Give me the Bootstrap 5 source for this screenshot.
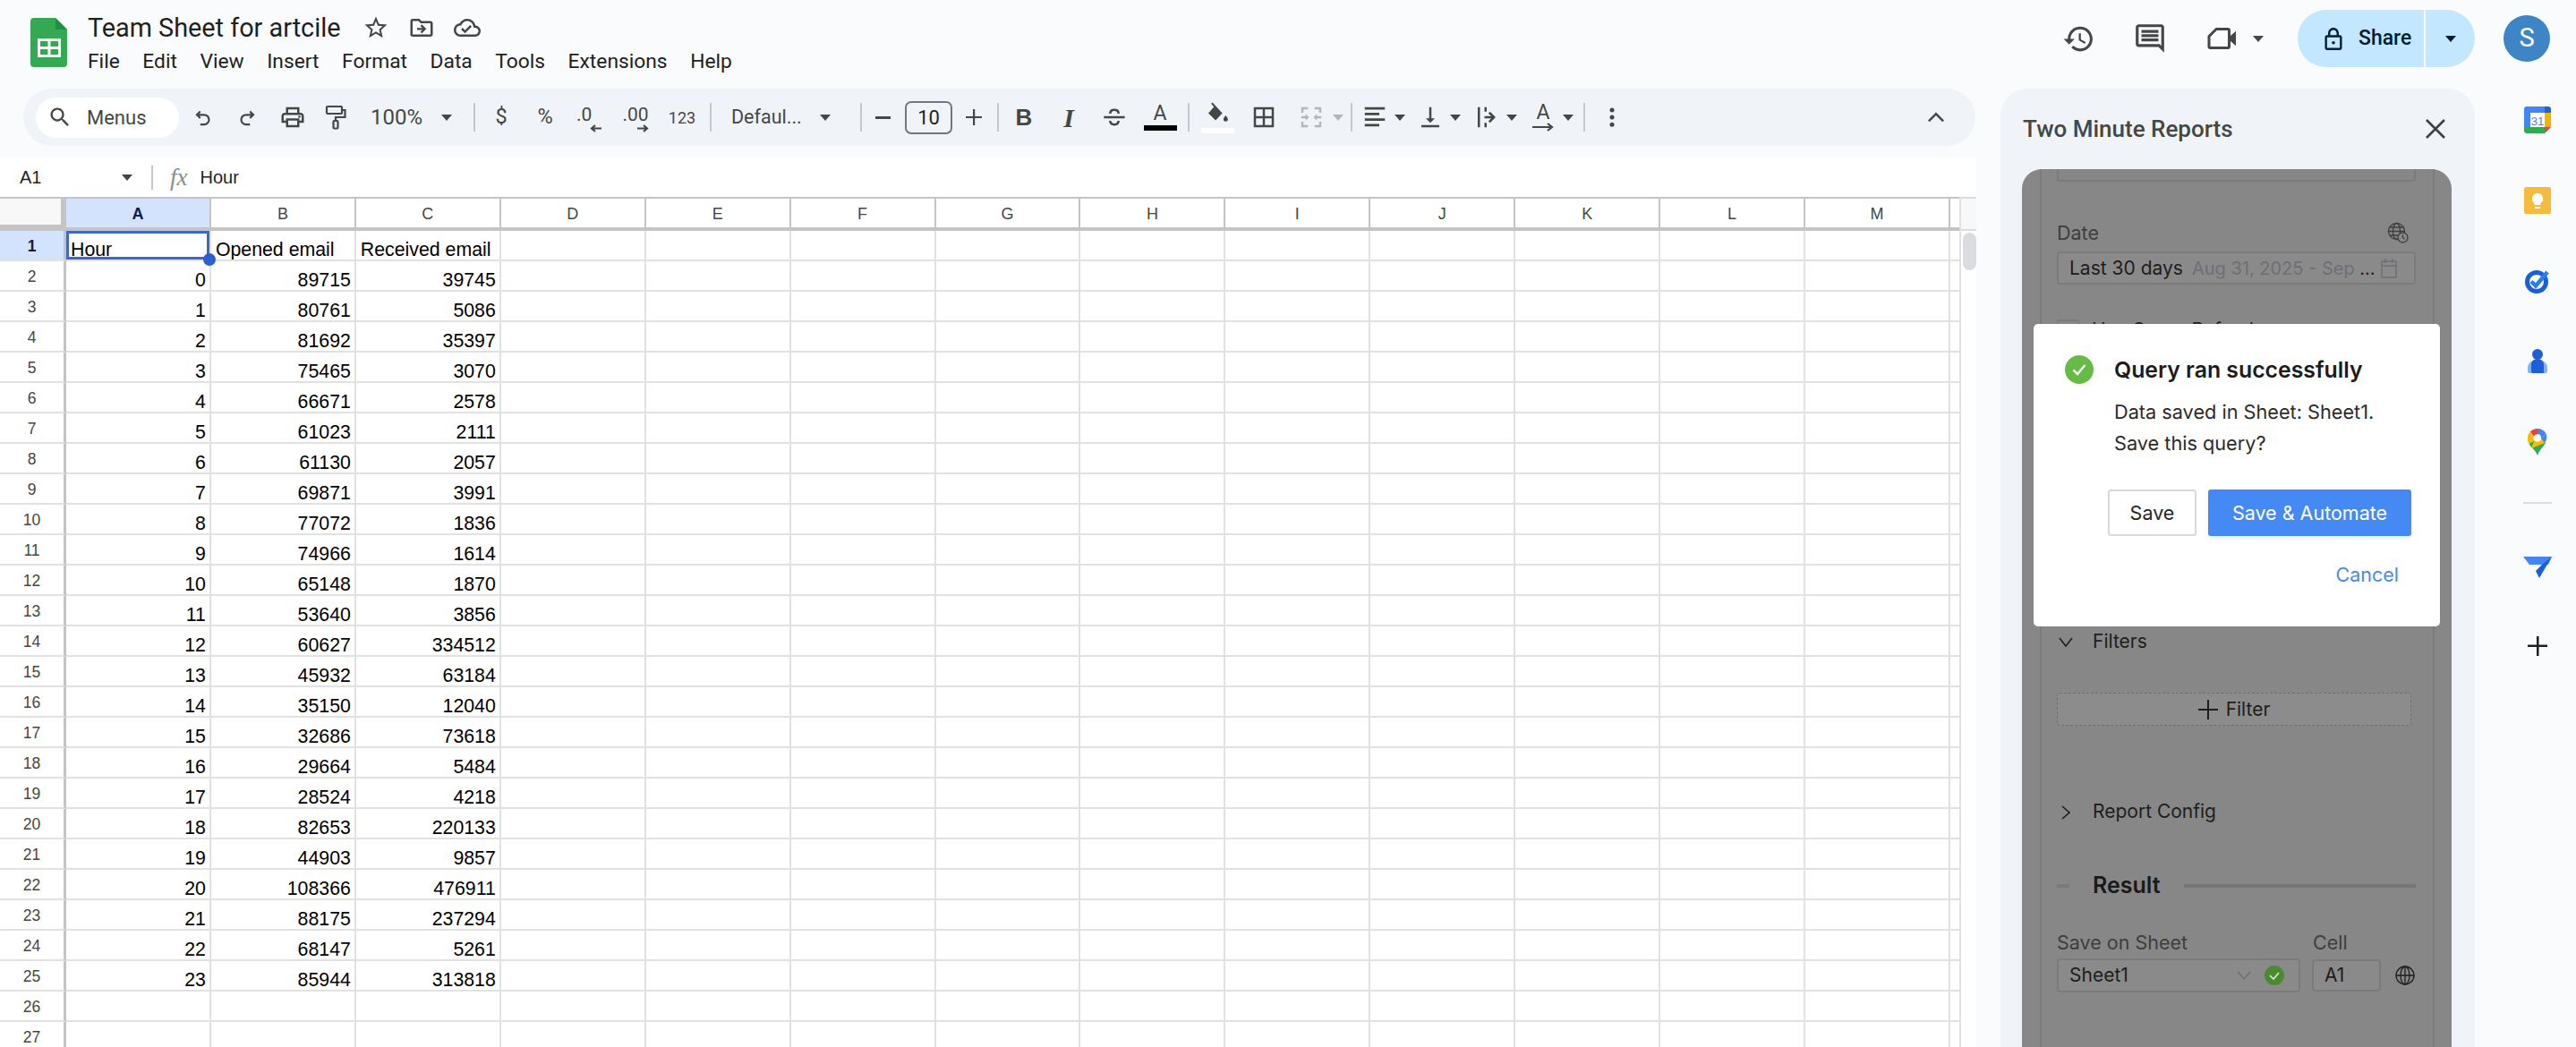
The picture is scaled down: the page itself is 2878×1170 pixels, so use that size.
<!DOCTYPE html>
<html lang="en">
<head>
<meta charset="utf-8">
<title>Team Sheet for artcile</title>
<link href="https://cdn.jsdelivr.net/npm/bootstrap@5.3.0/dist/css/bootstrap.min.css" rel="stylesheet">
<style>
html,body{height:100%;overflow:hidden;background:#f9fbfd;}
body{font-family:Roboto,"Liberation Sans",sans-serif;color:#1f1f1f;}
svg{display:block;fill:currentColor;flex:none;}
svg.ln{fill:none;stroke:currentColor;}
.app-shell{width:2878px;height:1170px;}
.main-row{min-height:0;}
.top-bar{height:99px;flex:none;}
.doc-logo{margin:20px 23px 0 34px;}
.doc-title{font-size:28.8px;line-height:34px;margin-top:14px;white-space:nowrap;}
.doc-title-icons{color:#444746;gap:21px;margin-left:25px;}
.doc-menu{font-size:22.8px;line-height:28px;margin-top:7px;color:#1f1f1f;}
.doc-menu span{margin-right:25.500px;}
.top-actions{margin-left:auto;height:86px;color:#444746;}
.act-history{margin-right:42px;}
.act-comment{margin-right:44px;}
.tcaret{display:inline-block;width:0;height:0;border-left:6px solid transparent;border-right:6px solid transparent;border-top:7px solid #444746;flex:none;}
.share-group{width:198px;height:64px;margin-left:38px;border-radius:32px;background:#c2e7ff;color:#001d35;overflow:hidden;}
.share-main{width:143px;padding-left:30px;gap:18px;font-size:23px;font-weight:500;border-right:2px solid #f9fbfd;height:100%;}
.share-drop{flex:1;height:100%;}
.share-drop .tcaret{border-top-color:#001d35;}
.avatar-s{width:52px;height:52px;border-radius:50%;background:#3d85c6;color:#fff;font-size:29px;margin:0 29px 0 32px;}
.left-col{width:2208px;flex:none;}
.tool-bar{width:2181px;height:64px;margin:0 0 13px 26px;padding-left:14px;border-radius:32px;background:#f0f4f9;color:#444746;flex:none;font-size:23.500px;}
.menu-search{width:160px;height:45px;border-radius:23px;background:#fff;padding-left:13px;gap:16px;margin-right:3px;font-size:22px;color:#444746;}
.tw{display:flex;align-items:center;justify-content:center;height:64px;flex:none;}
.tw-40{width:40px}.tw-42{width:42px}.tw-44{width:44px}.tw-46{width:46px}.tw-48{width:48px}.tw-50{width:50px}.tw-52{width:52px}.tw-56{width:56px}.tw-58{width:58px}.tw-62{width:62px}
.tsep{width:2px;height:32px;background:#c7c7c7;flex:none;}
.ml-2px{margin-left:2px}.ml-3px{margin-left:3px}.ml-6px{margin-left:6px}.ml-7px{margin-left:7px}.ml-8px{margin-left:8px}.ml-9px{margin-left:9px}.ml-11px{margin-left:11px}.ml-16px{margin-left:16px}
.zoom-slot{width:132px;padding-left:17px;font-size:24px;}
.zoom-slot .tcaret{margin-left:21px;}
.font-slot{width:166px;padding-left:22px;font-size:21.500px;}
.font-slot .tcaret{margin-left:20px;}
.dec-stack{display:flex;flex-direction:column;align-items:flex-end;font-size:21px;line-height:22px;margin-top:2px;}
.dec-one{width:28px;}
.num123{font-size:18px;}
.size-box{width:53px;height:37px;border:2px solid #747775;border-radius:7px;margin-left:2px;color:#1f1f1f;font-size:22px;flex:none;}
.fmt-b{font-family:"Liberation Sans",sans-serif;font-weight:700;font-size:26px;}
.fmt-i{font-family:"Liberation Serif",serif;font-weight:700;font-style:italic;font-size:30px;}
.color-stack{display:flex;flex-direction:column;align-items:center;width:37px;}
.color-a{font-size:23px;line-height:22px;}
.color-bar{width:37px;height:6px;background:#000;margin-top:2px;}
.color-bar-w{background:#fff;}
.merge-off{color:#b3b5b7;}
.tcaret-off{border-top-color:#b3b5b7;}
.tool-end{margin-left:auto;margin-right:22px;}
.formula-bar{height:44px;background:#fff;flex:none;font-family:"Liberation Sans",sans-serif;padding-left:22px;font-size:20px;color:#1f1f1f;}
.name-box{width:147px;}
.name-box .tcaret{margin-left:auto;margin-right:21px;}
.fx-sep{width:2px;height:27px;background:#c7c7c7;}
.fx-mark{font-family:"Liberation Serif",serif;font-style:italic;font-size:27px;color:#8a8d8f;margin:0 14px 0 19px;line-height:1;}
.grid-wrap{flex:1;min-height:0;background:#fff;overflow:hidden;}
.gs-grid{table-layout:fixed;border-collapse:separate;border-spacing:0;width:2189px;font-family:"Liberation Sans",sans-serif;font-size:21.300px;color:#000;flex:none;}
.gs-grid col.c-row{width:74px}.gs-grid col.c-dat{width:161.920px}.gs-grid col.c-end{width:10px}
.gs-grid thead th{height:38px;border-top:2px solid #c4c4c4;border-bottom:4px solid #c4c4c4;border-right:2px solid #c4c4c4;text-align:center;font-weight:400;font-size:18px;color:#444746;padding:3px 0 0;}
.gs-grid thead th.corner{background:#f8f8f8;border-right:6px solid #c4c4c4;border-bottom:7px solid #c4c4c4;}
.gs-grid thead th.hl{background:#d3e3fd;color:#0b1f4b;font-weight:700;}
.gs-grid thead th.last-col{border-right:0;}
.gs-grid tbody th{height:34px;padding:3px 0 0;border-right:3px solid #c4c4c4;border-bottom:2px solid #e1e1e1;text-align:center;font-weight:400;font-size:17.500px;color:#444746;}
.gs-grid tbody th.hl{background:#d3e3fd;color:#0b1f4b;font-weight:700;}
.gs-grid td{height:34px;padding:0 4px 0 5px;border-right:2px solid #e1e1e1;border-bottom:2px solid #e1e1e1;vertical-align:bottom;line-height:21px;white-space:nowrap;overflow:hidden;}
.gs-grid td.num{text-align:right;}
.gs-grid td.last-col{border-right:0;}
.gs-grid td.cell-active{position:relative;overflow:visible;box-shadow:inset 0 0 0 3px #3c68c6;}
.fill-handle{position:absolute;right:-7px;bottom:-7px;width:14px;height:14px;border-radius:50%;background:#2a5fcf;z-index:2;}
.scroll-gutter{flex:1;border-left:2px solid #e1e1e1;}
.gutter-head{height:38px;background:#f8f8f8;border-top:2px solid #dcdcdc;border-bottom:2px solid #dcdcdc;}
.scroll-thumb{width:15px;height:42px;margin:2px 0 0 2px;border-radius:8px;background:#dadce0;}
.side-panel{width:530px;margin-left:27px;border-radius:30px 30px 0 0;background:#f0f4f9;flex:none;font-family:Inter,"Liberation Sans",sans-serif;}
.side-head{height:90px;padding:0 32px 0 25px;flex:none;color:#3c4043;}
.side-title{font-family:Roboto,sans-serif;font-size:26px;font-weight:500;color:#444746;}
.addon-body{position:relative;flex:1;margin:0 26px 0 24px;background:#878787;border-radius:22px 22px 0 0;overflow:hidden;padding:0 19px 0 20px;min-height:0;}
.addon-card{height:100%;border-left:2px solid #7b7b7b;border-right:2px solid #7b7b7b;padding:0 19px 0 17px;font-size:21px;color:#1d1d1d;}
.stub-field{height:14px;border:2px solid #7b7b7b;border-top:0;border-radius:0 0 3px 3px;}
.fld-label{color:#3e3e3e;font-size:21.500px;line-height:28px;}
.mt-date{margin-top:43px;}
.fld-box{height:37px;border:2px solid #7b7b7b;border-radius:4px;background:#8a8a8a;padding:0 12px;white-space:nowrap;overflow:hidden;}
.mt-box{margin-top:7px;}
.date-range{color:#6d6f75;font-size:20px;margin-left:10px;}
.range-dots{color:#1d1d1d;}
.ic-cal{color:#6d6f75;margin-left:auto;margin-right:6px;}
.chk-row{margin-top:38px;height:26px;gap:14px;}
.chk-box{width:25px;height:25px;border:2px solid #7b7b7b;border-radius:3px;}
.filter-row{margin-top:322px;height:26px;gap:20px;}
.chev{flex:none;width:20px;}
.dash-btn{height:37px;width:396px;margin-top:44px;border:1px dashed #6f6f6f;background:#8c8c8c;border-radius:3px;gap:9px;}
.report-row{margin-top:83px;height:26px;gap:20px;}
.result-row{margin-top:52px;height:36px;font-size:25px;font-weight:600;color:#1a1a1a;}
.result-rule{height:4px;background:#767676;}
.rule-a{width:14px;margin-right:26px;background:#7b7b7b;}
.rule-b{flex:1;margin-left:26px;}
.labels-row{margin-top:31px;}
.lab-sheet{width:286px;}
.sheet-row{margin-top:4px;height:38px;}
.sel-sheet{width:272px;height:38px;margin-right:13px;flex:none;}
.sel-sheet svg.sel-chev{margin-left:auto;margin-right:14px;color:#6f6f6f;}
.ok-dot{width:22px;height:28px;flex:none;margin-right:4px;}
.cell-box{width:77px;height:36px;flex:none;}
.ic-globe{margin-left:16px;color:#1d1d1d;}
.qr-dialog{position:absolute;left:13px;top:173px;width:454px;height:338px;background:#fff;border-radius:5px;font-family:Inter,"Liberation Sans",sans-serif;z-index:3;}
.qr-head{padding:35px 0 0 35px;gap:23px;}
.qr-title{font-size:24.800px;font-weight:600;color:#1c1c1c;line-height:32px;}
.qr-text{margin:15px 0 0 90px;font-size:21.700px;text-rendering:geometricPrecision;line-height:35px;color:#2b2b2b;}
.qr-actions{margin:33px 32px 0 0;gap:13px;}
.qr-btn{height:52px;font-size:21.500px;border-radius:3px;padding:0;}
.qr-save{width:99px;background:#fff;border:2px solid #d9d9d9;color:#262626;}
.qr-auto{width:227px;background:#4589f5;border:0;color:#fff;box-shadow:0 3px 4px rgba(0,0,0,.08);}
.qr-cancel{margin:27px 46px 0 0;font-size:21.500px;color:#4a8ae6;text-align:right;line-height:32px;}
.app-strip{flex:1;padding:20px 0 0 27px;}
.strip-item{height:30px;margin-bottom:60px;}
.strip-div{width:32px;height:2px;background:#dadce0;margin:-8px 0 56px;}
.strip-cal{font-family:"Liberation Sans",sans-serif;}
</style>
</head>
<body>
<div class="app-shell d-flex flex-column">
  <header class="top-bar d-flex align-items-start">
    <svg class="doc-logo" width="41" height="55" viewBox="0 0 41 55"><path fill="#34a853" d="M4 0h24l13 13v38a4 4 0 0 1-4 4H4a4 4 0 0 1-4-4V4a4 4 0 0 1 4-4z"/><path fill="#1f8f45" d="M28 0l13 13H28z"/><path fill="#fff" d="M8 23h26v21H8zm3 3v6h8.500v-6zm11.500 0v6H31v-6zM11 35v6h8.500v-6zm11.500 0v6H31v-6z" fill-rule="evenodd"/></svg>
    <div>
      <div class="d-flex align-items-center doc-title">
        <span>Team Sheet for artcile</span>
        <div class="d-flex align-items-center doc-title-icons">
          <svg width="30" height="30" viewBox="0 0 24 24"><path d="M22 9.240l-7.190-.62L12 2 9.190 8.630 2 9.240l5.460 4.730L5.820 21 12 17.270 18.180 21l-1.630-7.030L22 9.240zM12 15.400l-3.760 2.270 1-4.280-3.320-2.880 4.380-.38L12 6.100l1.710 4.040 4.380.38-3.320 2.880 1 4.280L12 15.400z"/></svg>
          <svg width="30" height="30" viewBox="0 0 24 24"><path d="M20 6h-8l-2-2H4c-1.100 0-1.990.9-1.990 2L2 18c0 1.100.9 2 2 2h16c1.100 0 2-.9 2-2V8c0-1.100-.9-2-2-2zm0 12H4V6h5.170l2 2H20v10zM12.200 17l4-4-4-4-1.300 1.300 1.800 1.800H8v1.800h4.700l-1.800 1.800z"/></svg>
          <svg width="30" height="30" viewBox="0 0 24 24"><path d="M19.350 10.040C18.670 6.590 15.640 4 12 4 9.110 4 6.600 5.640 5.350 8.040 2.340 8.360 0 10.910 0 14c0 3.310 2.690 6 6 6h13c2.760 0 5-2.240 5-5 0-2.640-2.050-4.780-4.650-4.960zM19 18H6c-2.210 0-4-1.790-4-4 0-2.050 1.530-3.760 3.560-3.970l1.070-.11.5-.95C8.080 7.140 9.940 6 12 6c2.620 0 4.880 1.860 5.390 4.430l.3 1.500 1.530.11c1.560.1 2.780 1.410 2.780 2.960 0 1.650-1.350 3-3 3zm-9-3.820l-2.090-2.090L6.500 13.500 10 17l6.010-6.010-1.410-1.410z"/></svg>
        </div>
      </div>
      <div class="doc-menu d-flex"><span>File</span><span>Edit</span><span>View</span><span>Insert</span><span>Format</span><span>Data</span><span>Tools</span><span>Extensions</span><span>Help</span></div>
    </div>
    <div class="top-actions d-flex align-items-center">
      <svg class="act-history" width="37" height="37" viewBox="0 0 24 24"><path d="M13 3c-4.970 0-9 4.030-9 9H1l3.890 3.890.07.14L9 12H6c0-3.870 3.130-7 7-7s7 3.130 7 7-3.130 7-7 7c-1.930 0-3.680-.79-4.940-2.060l-1.420 1.420C8.270 19.990 10.510 21 13 21c4.970 0 9-4.030 9-9s-4.030-9-9-9zm-1 5v5l4.280 2.540.72-1.210-3.500-2.080V8H12z"/></svg>
      <svg class="act-comment" width="38" height="38" viewBox="0 0 24 24"><path d="M21.990 4c0-1.100-.89-2-1.990-2H4c-1.100 0-2 .9-2 2v12c0 1.100.9 2 2 2h14l4 4-.01-18zM20 4v13.170L18.830 16H4V4h16zM6 12h12v2H6zm0-3h12v2H6zm0-3h12v2H6z"/></svg>
      <svg width="36" height="36" viewBox="0 0 24 24"><path d="M7 4h9a2 2 0 0 1 2 2v4l4-3.500v11L18 14v4a2 2 0 0 1-2 2H3a2 2 0 0 1-2-2V10zm.8 2L3 10.800V18h13V6z"/></svg>
      <span class="tcaret ml-16px"></span>
      <div class="share-group d-flex align-items-center">
        <div class="share-main d-flex align-items-center">
          <svg width="20" height="25" viewBox="4 1 16 21"><path d="M18 8h-1V6c0-2.760-2.240-5-5-5S7 3.240 7 6v2H6c-1.100 0-2 .9-2 2v10c0 1.100.9 2 2 2h12c1.100 0 2-.9 2-2V10c0-1.100-.9-2-2-2zM9 6c0-1.660 1.340-3 3-3s3 1.340 3 3v2H9V6zm9 14H6V10h12v10zm-6-3.500a1.500 1.500 0 1 0 0-3 1.500 1.500 0 0 0 0 3z"/></svg>
          <span>Share</span>
        </div>
        <div class="share-drop d-flex align-items-center justify-content-center"><span class="tcaret"></span></div>
      </div>
      <div class="avatar-s d-flex align-items-center justify-content-center">S</div>
    </div>
  </header>

  <div class="main-row d-flex flex-grow-1">
    <div class="left-col d-flex flex-column">
      <div class="tool-bar d-flex align-items-center">
        <div class="menu-search d-flex align-items-center">
          <svg width="28" height="28" viewBox="0 0 24 24"><path d="M15.500 14h-.79l-.28-.27C15.410 12.590 16 11.110 16 9.500 16 5.910 13.090 3 9.500 3S3 5.910 3 9.500 5.910 16 9.500 16c1.610 0 3.090-.59 4.230-1.570l.27.28v.79l5 4.990L20.490 19l-4.990-5zm-6 0C7.010 14 5 11.990 5 9.500S7.010 5 9.500 5 14 7.010 14 9.500 11.990 14 9.500 14z"/></svg>
          <span>Menus</span>
        </div>
        <div class="tw tw-48"><svg class="ln" width="26" height="26" viewBox="0 0 24 24" stroke-width="2"><path d="M9 6 5.500 9.500 9 13M6 9.500h7a5 5 0 0 1 0 10H9"/></svg></div>
        <div class="tw tw-50"><svg class="ln" width="26" height="26" viewBox="0 0 24 24" stroke-width="2"><path d="M15 6l3.500 3.500L15 13M18 9.500h-7a5 5 0 0 0 0 10H15"/></svg></div>
        <div class="tw tw-52"><svg width="30" height="30" viewBox="0 0 24 24"><path d="M19 8h-1V3H6v5H5c-1.660 0-3 1.340-3 3v6h4v4h12v-4h4v-6c0-1.660-1.340-3-3-3zM8 5h8v3H8V5zm8 14H8v-4h8v4zm4-4h-2v-2H6v2H4v-4c0-.55.45-1 1-1h14c.55 0 1 .45 1 1v4z"/><circle cx="18" cy="11.500" r="1"/></svg></div>
        <div class="tw tw-44"><svg class="ln" width="24" height="28" viewBox="0 0 24 28" stroke-width="2.200"><rect x="2" y="2" width="17" height="8" rx="1"/><path d="M19 6h3.500v8H12v4"/><rect x="9.500" y="18" width="5" height="8.500" rx="1"/></svg></div>
        <div class="tw zoom-slot justify-content-start"><span>100%</span><span class="tcaret"></span></div>
        <span class="tsep"></span>
        <div class="tw tw-58"><span>$</span></div>
        <div class="tw tw-40"><span>%</span></div>
        <div class="tw tw-58"><div class="dec-stack dec-one"><span class="align-self-start">.0</span><svg class="ln" width="13" height="9" viewBox="0 0 13 9" stroke-width="2.200"><path d="M13 4.500H2M6 1 2 4.500 6 8"/></svg></div></div>
        <div class="tw tw-46"><div class="dec-stack"><span>.00</span><svg class="ln" width="13" height="9" viewBox="0 0 13 9" stroke-width="2.200"><path d="M0 4.500h11M7 1l4 3.500L7 8"/></svg></div></div>
        <div class="tw tw-58 num123"><span>123</span></div>
        <span class="tsep ml-2px"></span>
        <div class="tw font-slot justify-content-start"><span>Defaul...</span><span class="tcaret"></span></div>
        <span class="tsep"></span>
        <div class="tw tw-46"><svg width="17" height="3" viewBox="0 0 17 3"><rect width="17" height="3"/></svg></div>
        <div class="size-box d-flex align-items-center justify-content-center">10</div>
        <div class="tw tw-48"><svg width="18" height="18" viewBox="0 0 18 18"><path d="M8 0h2.200v7.900H18v2.200h-7.800V18H8v-7.900H0V7.900h8z"/></svg></div>
        <span class="tsep ml-2px"></span>
        <div class="tw tw-56 fmt-b"><span>B</span></div>
        <div class="tw tw-44 fmt-i"><span>I</span></div>
        <div class="tw tw-58"><svg class="ln" width="28" height="28" viewBox="0 0 24 24" stroke-width="2.200"><path d="M2 12h20M16 8.500C16 6 14.500 5 12 5S8 6 8 8.500M16 15.500c0 2.500-1.500 3.500-4 3.500s-4-1-4-3.500"/></svg></div>
        <div class="tw tw-44"><div class="color-stack"><span class="color-a">A</span><span class="color-bar"></span></div></div>
        <span class="tsep ml-9px"></span>
        <div class="tw tw-62"><div class="color-stack"><svg width="30" height="28" viewBox="0 0 24 22"><path d="M7.700 1 6.500 2l2.500 3-5 5.500L10.500 17l6-6.500L7.700 1zM19.500 12.500s-2 2.200-2 3.500a2 2 0 0 0 4 0c0-1.300-2-3.500-2-3.500z"/></svg><span class="color-bar color-bar-w"></span></div></div>
        <div class="tw tw-42"><svg width="30" height="30" viewBox="0 0 24 24"><path d="M3 3v18h18V3H3zm8 16H5v-6h6v6zm0-8H5V5h6v6zm8 8h-6v-6h6v6zm0-8h-6V5h6v6z"/></svg></div>
        <div class="tw tw-48 merge-off ml-8px"><svg width="30" height="30" viewBox="0 0 24 24"><path d="M3 3h6v2H5v3H3zM15 3h6v5h-2V5h-4zM3 16h2v3h4v2H3zM19 16h2v5h-6v-2h4zM3 11h4V9l3 3-3 3v-2H3zM21 13h-4v2l-3-3 3-3v2h4z"/></svg></div>
        <span class="tcaret tcaret-off"></span>
        <span class="tsep ml-8px"></span>
        <div class="tw tw-44 ml-3px"><svg width="30" height="30" viewBox="0 0 24 24"><path d="M3 3h18v2.200H3zM3 8h13v2.200H3zM3 13h18v2.200H3zM3 18h13v2.200H3z"/></svg></div>
        <span class="tcaret"></span>
        <div class="tw tw-44 ml-6px"><svg width="30" height="30" viewBox="0 0 24 24"><path d="M16 13h-3V3h-2v10H8l4 4 4-4zM4 19v2h16v-2H4z"/></svg></div>
        <span class="tcaret"></span>
        <div class="tw tw-44 ml-7px"><svg width="30" height="30" viewBox="0 0 24 24"><path d="M4 3h2v18H4zM10 3h2v4h-2zM10 17h2v4h-2zM10 11h6l-2.500-2.500L15 7l5 5-5 5-1.500-1.500L16 13h-6z"/></svg></div>
        <span class="tcaret"></span>
        <div class="tw tw-44 ml-7px"><div class="color-stack"><span class="color-a">A</span><svg class="ln" width="26" height="10" viewBox="0 0 26 10" stroke-width="2.200"><path d="M1 5h22M18 1l5 4-5 4"/></svg></div></div>
        <span class="tcaret"></span>
        <span class="tsep ml-11px"></span>
        <div class="tw tw-44 ml-8px"><svg width="30" height="30" viewBox="0 0 24 24"><circle cx="12" cy="5.500" r="2"/><circle cx="12" cy="12" r="2"/><circle cx="12" cy="18.500" r="2"/></svg></div>
        <div class="tw tw-44 tool-end"><svg width="24" height="24" viewBox="0 0 24 24"><path d="M12 6.500 3 15.500l1.800 1.800L12 10.100l7.200 7.200 1.800-1.800z"/></svg></div>
      </div>
      <div class="formula-bar d-flex align-items-center">
        <div class="name-box d-flex align-items-center"><span>A1</span><span class="tcaret"></span></div>
        <span class="fx-sep"></span>
        <span class="fx-mark">fx</span>
        <span>Hour</span>
      </div>
      <div class="grid-wrap d-flex">
        <table class="gs-grid">
          <colgroup id="gridCols"></colgroup>
          <thead><tr id="gridHead"></tr></thead>
          <tbody id="gridBody"></tbody>
        </table>
        <div class="scroll-gutter"><div class="gutter-head"></div><div class="scroll-thumb"></div></div>
      </div>
    </div>

    <aside class="side-panel d-flex flex-column">
      <div class="side-head d-flex align-items-center justify-content-between">
        <span class="side-title">Two Minute Reports</span>
        <svg class="ln" width="24" height="24" viewBox="0 0 24 24" stroke-width="2.600"><path d="M2 2l20 20M22 2 2 22"/></svg>
      </div>
      <div class="addon-body">
        <div class="addon-card">
          <div class="stub-field"></div>
          <div class="fld-label mt-date d-flex align-items-center justify-content-between">
            <span>Date</span>
            <svg class="ln me-2" width="24" height="24" viewBox="0 0 24 24" stroke-width="1.300"><circle cx="10.500" cy="10.500" r="9"/><ellipse cx="10.500" cy="10.500" rx="4" ry="9"/><path d="M1.500 10.500h18M3 6h15M3 15h15"/><circle cx="17.500" cy="17.500" r="5.500" fill="#878787"/><path d="M17.500 14.500v3l2 1.500"/></svg>
          </div>
          <div class="fld-box mt-box d-flex align-items-center">
            <span>Last 30 days</span>
            <span class="date-range">Aug 31, 2025 - Sep <span class="range-dots">...</span></span>
            <svg class="ln ic-cal" width="20" height="24" viewBox="0 0 20 24" stroke-width="1.500"><path d="M2 4h16v18H2zM2 9h16M6 1v5M14 1v5"/></svg>
          </div>
          <div class="chk-row d-flex align-items-center">
            <span class="chk-box"></span><span>Use Query Refresh</span>
          </div>
          <div class="filter-row d-flex align-items-center">
            <svg class="ln chev" width="20" height="14" viewBox="0 0 20 14" stroke-width="1.600"><path d="M3 3l7 9 7-9"/></svg>
            <span>Filters</span>
          </div>
          <div class="dash-btn d-flex align-items-center justify-content-center">
            <svg width="22" height="22" viewBox="0 0 22 22"><path d="M10 0h2v10h10v2H12v10h-2V12H0v-2h10z" fill="#1d1d1d"/></svg>
            <span>Filter</span>
          </div>
          <div class="report-row d-flex align-items-center">
            <svg class="ln chev" width="20" height="20" viewBox="0 0 20 20" stroke-width="1.600"><path d="M6 4l8 7-8 7"/></svg>
            <span>Report Config</span>
          </div>
          <div class="result-row d-flex align-items-center">
            <span class="result-rule rule-a"></span><span>Result</span><span class="result-rule rule-b"></span>
          </div>
          <div class="labels-row d-flex fld-label"><span class="lab-sheet">Save on Sheet</span><span>Cell</span></div>
          <div class="sheet-row d-flex align-items-center">
            <div class="fld-box sel-sheet d-flex align-items-center">
              <span>Sheet1</span>
              <svg class="ln sel-chev" width="18" height="12" viewBox="0 0 18 12" stroke-width="1.400"><path d="M2 2l7 8 7-8"/></svg>
              <svg class="ok-dot" width="22" height="22" viewBox="0 0 22 22"><circle cx="11" cy="11" r="11" fill="#4b8b2f"/><path d="M6 11l4 4 6-7" fill="none" stroke="#dfe8da" stroke-width="1.600"/></svg>
            </div>
            <div class="fld-box cell-box d-flex align-items-center">A1</div>
            <svg class="ln ic-globe" width="22" height="22" viewBox="0 0 22 22" stroke-width="1.300"><circle cx="11" cy="11" r="10"/><ellipse cx="11" cy="11" rx="5" ry="10"/><path d="M1 11h20M11 1v20"/></svg>
          </div>
        </div>
        <div class="qr-dialog">
          <div class="qr-head d-flex align-items-center">
            <svg width="32" height="32" viewBox="0 0 32 32"><circle cx="16" cy="16" r="16" fill="#66bb46"/><path d="M9.500 16.500l4.500 4.500 8.500-10" fill="none" stroke="#fff" stroke-width="2.400"/></svg>
            <span class="qr-title">Query ran successfully</span>
          </div>
          <div class="qr-text">Data saved in Sheet: Sheet1.<br>Save this query?</div>
          <div class="qr-actions d-flex justify-content-end">
            <button type="button" class="btn qr-btn qr-save">Save</button>
            <button type="button" class="btn qr-btn qr-auto">Save &amp; Automate</button>
          </div>
          <div class="qr-cancel">Cancel</div>
        </div>
      </div>
    </aside>

    <nav class="app-strip d-flex flex-column align-items-center">
      <svg class="strip-item" width="30" height="30" viewBox="0 0 30 30"><path fill="#fff" d="M7 7h16v16H7z"/><path fill="#4285f4" d="M0 7h7v16H0z"/><path fill="#4285f4" d="M3 0h20v7H0V3a3 3 0 0 1 3-3z"/><path fill="#f4b400" d="M23 7h7v16h-7z"/><path fill="#1967d2" d="M23 0h4a3 3 0 0 1 3 3v4h-7z"/><path fill="#34a853" d="M0 23h23v7H3a3 3 0 0 1-3-3z"/><path fill="#ea4335" d="M23 23h7l-7 7z"/><text x="15" y="20.500" text-anchor="middle" font-size="13" fill="#4285f4" class="strip-cal">31</text></svg>
      <svg class="strip-item" width="30" height="30" viewBox="0 0 30 30"><rect width="30" height="30" rx="2" fill="#f4bb3c"/><path fill="#fff" d="M15 7a6 6 0 0 0-3.500 10.900V20h7v-2.100A6 6 0 0 0 15 7zM12 22h6v2h-6z"/></svg>
      <svg class="strip-item" width="30" height="30" viewBox="0 0 30 30"><circle cx="14" cy="16" r="10.500" fill="none" stroke="#1a5fd8" stroke-width="5"/><path d="M8 15.500l5 5L26 5" fill="none" stroke="#2b7de9" stroke-width="4.500"/></svg>
      <svg class="strip-item" width="30" height="30" viewBox="0 0 30 30"><circle cx="15" cy="7" r="6" fill="#1f5fd6"/><path d="M4 22a9 9 0 0 1 11-8.500A9 9 0 0 1 26 22v4a2 2 0 0 1-2 2H6a2 2 0 0 1-2-2z" fill="#8ab0ee"/><path d="M8 18a7 6 0 0 1 14 0v10H10a2 2 0 0 1-2-2z" fill="#1f5fd6"/></svg>
      <svg class="strip-item" width="22" height="30" viewBox="0 0 22 30"><path d="M11 0a11 11 0 0 1 9.500 5.500L15 11a4.500 4.500 0 0 0-4-5z" fill="#4285f4"/><path d="M2.800 3.500A11 11 0 0 1 11 0v6a4.500 4.500 0 0 0-4 2.500z" fill="#ea4335"/><path d="M2.800 3.500 7 8.500a4.500 4.500 0 0 0 .5 5L1.500 17A11 11 0 0 1 2.800 3.500z" fill="#f9bc05"/><path d="M20.500 5.500A11 11 0 0 1 19 16L15 11z" fill="#4285f4"/><path d="M1.500 17l6-3.500a4.500 4.500 0 0 0 7.500-2.500l5 5c-3 5-7 8-9 14-2-6-7.500-9-9.500-13z" fill="#34a853"/><path d="M7.500 13.500a4.500 4.500 0 0 0 7.500-2.500l4 5-15 6z" fill="#fbbc04"/><circle cx="11" cy="10.500" r="4" fill="#fff"/></svg>
      <span class="strip-div"></span>
      <svg class="strip-item" width="32" height="24" viewBox="0 0 32 24"><path d="M0 0h32l-4 9H7z" fill="#4285f4"/><path d="M32 0 18 24l-4-8 7-7z" fill="#1a5fd8"/></svg>
      <svg width="26" height="26" viewBox="0 0 26 26"><path d="M12 2h2.500v9.500H24V14h-9.500v10H12V14H2v-2.500h10z" fill="#1f1f1f"/></svg>
    </nav>
  </div>
</div>
<script src="https://cdn.jsdelivr.net/npm/bootstrap@5.3.0/dist/js/bootstrap.bundle.min.js"></script>
<script>
var letters="ABCDEFGHIJKLM".split("");
document.getElementById("gridCols").innerHTML='<col class="c-row">'+letters.map(function(){return '<col class="c-dat">';}).join("")+'<col class="c-end">';
document.getElementById("gridHead").innerHTML='<th class="corner"></th>'+letters.map(function(l,i){return '<th class="'+(i==0?'hl':'')+'">'+l+'</th>';}).join("")+'<th class="last-col"></th>';
var data=[[89715,39745],[80761,5086],[81692,35397],[75465,3070],[66671,2578],[61023,2111],[61130,2057],[69871,3991],[77072,1836],[74966,1614],[65148,1870],[53640,3856],[60627,334512],[45932,63184],[35150,12040],[32686,73618],[29664,5484],[28524,4218],[82653,220133],[44903,9857],[108366,476911],[88175,237294],[68147,5261],[85944,313818]];
function blanks(n){var s="";for(var i=0;i<n;i++)s+="<td></td>";return s+'<td class="last-col"></td>';}
var html='<tr><th class="hl">1</th><td class="cell-active">Hour<span class="fill-handle"></span></td><td>Opened email</td><td>Received email</td>'+blanks(10)+'</tr>';
for(var r=0;r<26;r++){
  var d=data[r];
  html+='<tr><th>'+(r+2)+'</th>'+(d?'<td class="num">'+r+'</td><td class="num">'+d[0]+'</td><td class="num">'+d[1]+'</td>':'<td></td><td></td><td></td>')+blanks(10)+'</tr>';
}
document.getElementById("gridBody").innerHTML=html;
</script>
</body>
</html>
